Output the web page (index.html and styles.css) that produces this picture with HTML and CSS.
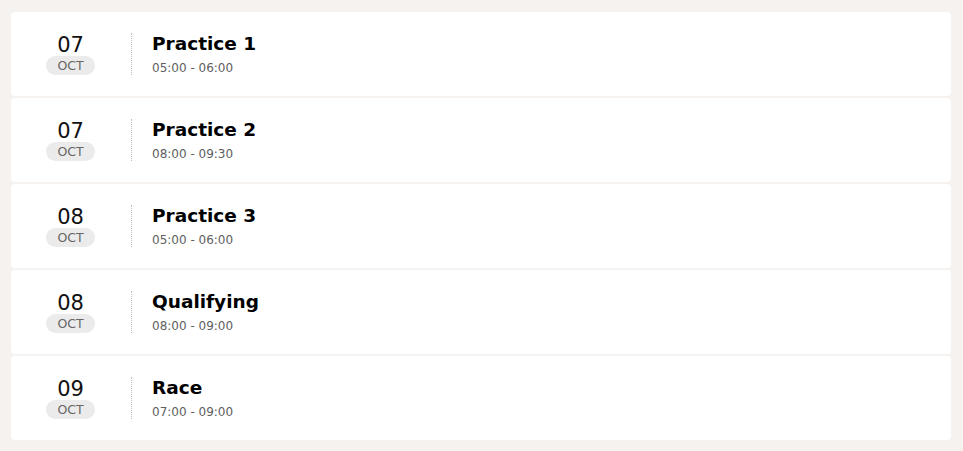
FILE: index.html
```html
<!DOCTYPE html>
<html>
<head>
<meta charset="utf-8">
<link rel="stylesheet" href="styles.css">
</head>
<body>
<div class="list">
  <div class="card">
    <div class="date"><span class="day">07</span><span class="month">OCT</span></div>
    <div class="info"><div class="title">Practice 1</div><div class="time">05:00 - 06:00</div></div>
  </div>
  <div class="card">
    <div class="date"><span class="day">07</span><span class="month">OCT</span></div>
    <div class="info"><div class="title">Practice 2</div><div class="time">08:00 - 09:30</div></div>
  </div>
  <div class="card">
    <div class="date"><span class="day">08</span><span class="month">OCT</span></div>
    <div class="info"><div class="title">Practice 3</div><div class="time">05:00 - 06:00</div></div>
  </div>
  <div class="card">
    <div class="date"><span class="day">08</span><span class="month">OCT</span></div>
    <div class="info"><div class="title">Qualifying</div><div class="time">08:00 - 09:00</div></div>
  </div>
  <div class="card">
    <div class="date"><span class="day">09</span><span class="month">OCT</span></div>
    <div class="info"><div class="title">Race</div><div class="time">07:00 - 09:00</div></div>
  </div>
</div>
</body>
</html>
```
FILE: styles.css
```css
html, body {
  margin: 0;
  padding: 0;
  background: #f6f2ef;
}
.list {
  display: flex;
  flex-direction: column;
  gap: 2px;
  padding: 12px 12px 11px 11px;
}
.card {
  display: flex;
  align-items: center;
  height: 84px;
  background: #ffffff;
  border-radius: 4px;
}
.date {
  width: 119px;
  margin-right: 1px;
  padding-top: 2px;
  display: flex;
  flex-direction: column;
  align-items: center;
}
.day {
  font-family: "DejaVu Sans", sans-serif;
  font-size: 21px;
  line-height: 21px;
  color: #111;
}
.month {
  margin-top: 0;
  width: 49px;
  height: 19px;
  line-height: 19px;
  text-align: center;
  background: #ebebeb;
  border-radius: 10px;
  font-family: "DejaVu Sans", sans-serif;
  font-size: 12.5px;
  color: #666;
}
.info {
  border-left: 1px dotted #bdbdbd;
  height: 42px;
  padding-left: 20px;
  display: flex;
  flex-direction: column;
  justify-content: center;
}
.title {
  font-family: "DejaVu Sans", sans-serif;
  font-weight: bold;
  font-size: 18.5px;
  line-height: 20px;
  color: #000;
}
.time {
  margin-top: 7px;
  font-family: "DejaVu Sans", sans-serif;
  font-size: 12px;
  line-height: 14px;
  color: #5e5e5e;
}
```
